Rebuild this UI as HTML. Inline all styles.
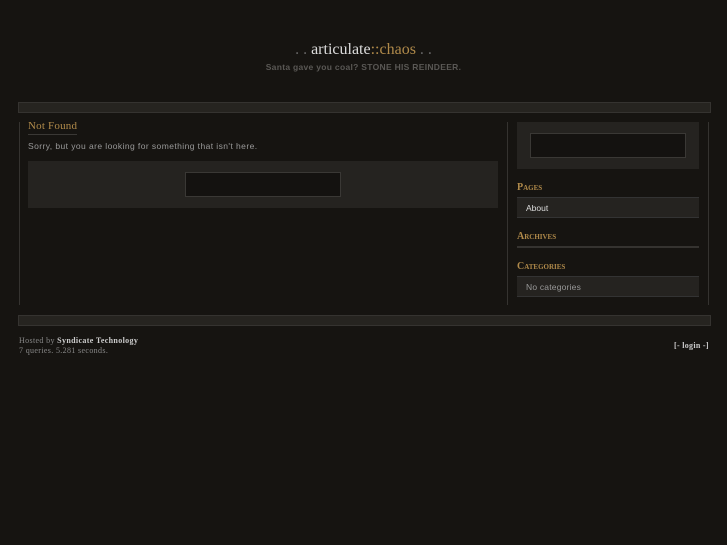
<!DOCTYPE html>
<html><head><style>
body{margin:0;background:#161411;width:727px;height:545px;position:relative;overflow:hidden;font-family:"Liberation Sans",sans-serif}
.a{position:absolute}
.bar{background:#262420;border:1px solid #353330;box-sizing:border-box}
.serif{font-family:"Liberation Serif",serif}
.sc{font-family:"Liberation Serif",serif;color:#b08a4a;font-variant:small-caps;font-size:10px;font-weight:bold;letter-spacing:0}
.inp{background:#141210;border:1px solid #3a3835;box-sizing:border-box}
</style></head><body>
<div class="a serif" style="left:0;width:727px;top:41px;text-align:center;font-size:16px;color:#ddd"><span style="color:#666">. . </span>articulate<span style="color:#b08a4a">::chaos</span><span style="color:#666"> . .</span></div>
<div class="a" style="left:0;width:727px;top:62px;text-align:center;font-size:8.5px;letter-spacing:0.3px;font-weight:bold;color:#5a5855">Santa gave you coal? STONE HIS REINDEER.</div>
<div class="a bar" style="left:18px;top:102px;width:693px;height:11px"></div>
<div class="a" style="left:19px;top:122px;width:1px;height:183px;background:#353330"></div>
<div class="a serif" style="left:28px;top:120px;font-size:11px;letter-spacing:0.2px;color:#b08a4a;border-bottom:1px solid #3a3835;padding-bottom:2px">Not Found</div>
<div class="a" style="left:28px;top:141px;font-size:8.5px;letter-spacing:0.42px;color:#999">Sorry, but you are looking for something that isn't here.</div>
<div class="a" style="left:28px;top:161px;width:470px;height:47px;background:#252320"></div>
<div class="a inp" style="left:185px;top:172px;width:156px;height:25px"></div>
<div class="a" style="left:507px;top:122px;width:1px;height:183px;background:#353330"></div>
<div class="a" style="left:708px;top:122px;width:1px;height:183px;background:#353330"></div>
<div class="a" style="left:517px;top:122px;width:182px;height:47px;background:#252320"></div>
<div class="a inp" style="left:530px;top:133px;width:156px;height:25px"></div>
<div class="a sc" style="left:517px;top:182px">Pages</div>
<div class="a" style="left:517px;top:197px;width:182px;height:21px;background:#252320;border-top:1px solid #333;border-bottom:1px solid #333;box-sizing:border-box;font-size:8.5px;color:#ddd;padding:5px 0 0 9px">About</div>
<div class="a sc" style="left:517px;top:231px">Archives</div>
<div class="a" style="left:517px;top:246px;width:182px;height:2px;background:#353330"></div>
<div class="a sc" style="left:517px;top:261px">Categories</div>
<div class="a" style="left:517px;top:276px;width:182px;height:21px;background:#252320;border-top:1px solid #333;border-bottom:1px solid #333;box-sizing:border-box;font-size:8.5px;letter-spacing:0.2px;color:#999;padding:5px 0 0 9px">No categories</div>
<div class="a bar" style="left:18px;top:315px;width:693px;height:11px"></div>
<div class="a serif" style="left:19px;top:336px;font-size:8px;letter-spacing:0.35px;color:#888;line-height:10px">Hosted by <b style="color:#ccc">Syndicate Technology</b><br>7 queries. 5.281 seconds.</div>
<div class="a serif" style="left:674px;top:341px;font-size:8px;letter-spacing:0.3px;color:#ccc;font-weight:bold">[- login -]</div>
</body></html>
